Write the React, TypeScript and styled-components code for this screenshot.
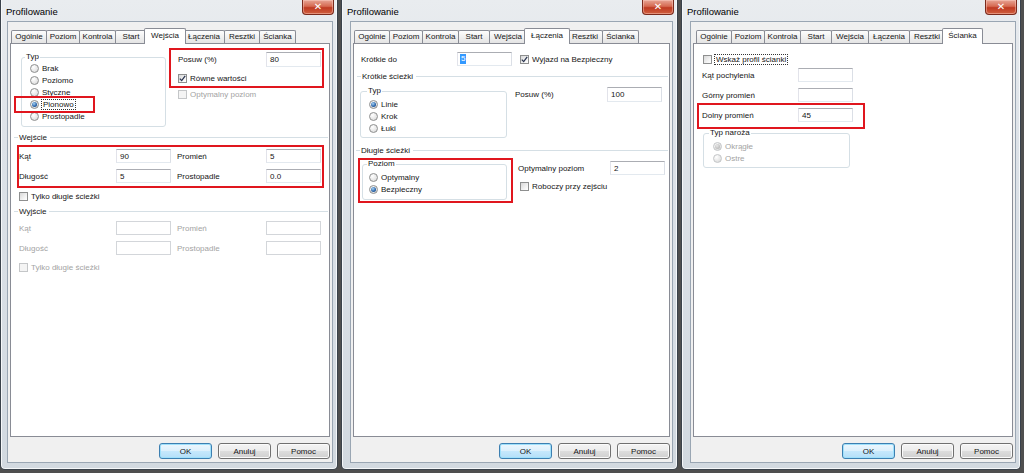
import React from 'react';
import styled, { createGlobalStyle, css } from 'styled-components';

const GlobalStyle = createGlobalStyle`
  html, body { margin: 0; padding: 0; }
  body {
    width: 1024px; height: 473px; overflow: hidden; background: #4a4a4a;
    font-family: 'Liberation Sans', Arial, sans-serif; font-size: 8px; color: #151515;
  }
  * { box-sizing: border-box; }
`;

const Desktop = styled.div`
  display: flex; gap: 3px; width: 1024px; height: 473px; background: #4f4f4f;
`;

const Window = styled.div<{ $w: number; $padL: number }>`
  width: ${p => p.$w}px; height: 470px; flex: none;
  display: flex; flex-direction: column;
  border: 1px solid #3a424b; border-top: none; border-radius: 0 0 5px 5px;
  background: linear-gradient(180deg, #e9ecef 0%, #dde2e8 30%, #d2d9e0 100%);
  box-shadow: inset 1px 0 0 #f5f7f9, inset -1px 0 0 #f5f7f9, inset 0 -1px 0 #f5f7f9;
  padding: 0 4px 6px ${p => p.$padL}px;
`;

const TitleBar = styled.div`
  height: 21px; flex: none; display: flex; align-items: flex-start; justify-content: space-between;
`;

const Title = styled.span<{ $ml: number }>`
  font-size: 9.5px; line-height: 11px; margin-top: 6px; margin-left: ${p => p.$ml}px; color: #000;
`;

const CloseBtn = styled.div`
  width: 32px; height: 15px; margin-right: -1px;
  border: 1px solid #7a2a1c; border-top: none; border-radius: 0 0 4px 4px;
  background: linear-gradient(180deg, #e7a595 0%, #d66a51 45%, #bf3a22 55%, #d0603f 100%);
  box-shadow: inset 0 0 0 1px rgba(255, 210, 200, 0.45);
  color: #fff; display: flex; align-items: center; justify-content: center;
  font: bold 10px 'DejaVu Sans', sans-serif; line-height: 1;
`;

const Client = styled.div`
  flex: 1; display: flex; flex-direction: column; min-height: 0;
  background: #f0f0f0; border: 1px solid #9aa6b3;
  padding: 6px 2px 3px 2px;
`;

const TabRow = styled.div<{ $inset: number }>`
  height: 15px; flex: none; display: flex; align-items: flex-end; padding-left: ${p => p.$inset}px;
  position: relative; z-index: 1;
`;

const Tab = styled.div<{ $active?: boolean; $w: number }>`
  width: ${p => p.$w}px; height: 13px; margin-left: -1px; white-space: nowrap;
  display: flex; justify-content: center;
  border: 1px solid #898c95; border-bottom: none; border-radius: 2px 2px 0 0;
  background: linear-gradient(180deg, #fdfdfd 0%, #f0f0f0 50%, #e4e4e4 100%);
  line-height: 12px; color: #151515;
  ${p => p.$active && css`
    width: ${p.$w + 4}px; height: 16px; margin: 0 -2px -1px -3px;
    background: #fff; position: relative; z-index: 2; line-height: 13px;
  `}
`;

const Panel = styled.div`
  flex: 1; min-height: 0; background: #fff; border: 1px solid #898c95;
  padding: 0 5px 0 7px; display: flex; flex-direction: column;
`;

const ButtonRow = styled.div`
  flex: none; display: flex; justify-content: flex-end; gap: 6px; margin-top: 6px;
`;

const Button = styled.div<{ $default?: boolean }>`
  width: 53px; height: 16px; display: flex; align-items: center; justify-content: center;
  border: 1px solid #707070; border-radius: 3px; color: #151515;
  background: linear-gradient(180deg, #f4f4f4 0%, #ebebeb 50%, #dddddd 51%, #d0d0d0 100%);
  box-shadow: inset 0 0 0 1px #fbfbfb;
  ${p => p.$default && css`
    border-color: #3c7fb1;
    background: linear-gradient(180deg, #ecf6fd 0%, #dcf0fc 50%, #c6e8fc 51%, #b4dff8 100%);
    box-shadow: inset 0 0 0 1px #9fe0fb;
  `}
`;

const Row = styled.div<{ $mt?: number; $ml?: number }>`
  display: flex; align-items: flex-start;
  margin-top: ${p => p.$mt ?? 0}px; margin-left: ${p => p.$ml ?? 0}px;
`;

const Column = styled.div<{ $ml?: number; $pl?: number; $pt?: number }>`
  flex: 1; display: flex; flex-direction: column; align-items: flex-start;
  margin-left: ${p => p.$ml ?? 0}px; padding-left: ${p => p.$pl ?? 0}px; padding-top: ${p => p.$pt ?? 0}px;
`;

const GroupBox = styled.fieldset<{ $w: number; $mt?: number; $ml?: number }>`
  width: ${p => p.$w}px; min-width: 0; flex: none;
  margin: ${p => p.$mt ?? 0}px 0 0 ${p => p.$ml ?? 0}px; padding: 0;
  border: 1px solid #d5dfe5; border-radius: 3px;
`;

const Legend = styled.legend<{ $off: number }>`
  padding: 0 1px; margin-left: ${p => p.$off - 2}px; line-height: 10px; font-size: 8px; color: #151515;
`;

const OptionList = styled.div<{ $pl: number; $pt?: number; $pb: number }>`
  display: flex; flex-direction: column;
  padding: ${p => p.$pt ?? 0}px 0 ${p => p.$pb}px ${p => p.$pl}px;
`;

const OptionRow = styled.div<{ $disabled?: boolean; $mt?: number; $ml?: number }>`
  display: flex; align-items: center; gap: 3px; height: 12px; white-space: nowrap;
  margin-top: ${p => p.$mt ?? 0}px; margin-left: ${p => p.$ml ?? 0}px;
  color: ${p => (p.$disabled ? '#a3a3a3' : '#151515')};
`;

const RadioDot = styled.span<{ $checked?: boolean; $disabled?: boolean }>`
  width: 9px; height: 9px; flex: none; border-radius: 50%;
  border: 1px solid ${p => (p.$disabled ? '#c4c6c8' : '#8e8f8f')};
  background: radial-gradient(circle at 35% 30%, #ffffff 0%, #e6e6e6 60%, #d2d2d2 100%);
  display: inline-flex; align-items: center; justify-content: center;
  &::after {
    content: ''; width: 5px; height: 5px; border-radius: 50%;
    display: ${p => (p.$checked ? 'block' : 'none')};
    background: ${p => (p.$disabled
      ? 'radial-gradient(circle at 40% 35%, #e8e8e8, #a9a9a9)'
      : 'radial-gradient(circle at 40% 35%, #a6d3f5, #2a63a8 60%, #123c70)')};
  }
`;

const CheckBox = styled.span<{ $disabled?: boolean }>`
  width: 9px; height: 9px; flex: none;
  border: 1px solid ${p => (p.$disabled ? '#c4c6c8' : '#8e8f8f')};
  background: ${p => (p.$disabled ? '#f4f4f4' : 'linear-gradient(135deg, #d8d8d8 0%, #f6f6f6 70%, #ffffff 100%)')};
  display: inline-flex; align-items: center; justify-content: center;
`;

const FocusText = styled.span`
  outline: 1px dotted #333; outline-offset: 0; padding: 0 1px;
`;

const FieldLine = styled.div<{ $mt?: number; $ml?: number; $lw: number; $h?: number; $disabled?: boolean }>`
  display: grid; grid-template-columns: ${p => p.$lw}px 55px; align-items: center; width: max-content;
  height: ${p => p.$h ?? 14}px;
  margin-top: ${p => p.$mt ?? 0}px; margin-left: ${p => p.$ml ?? 0}px;
  color: ${p => (p.$disabled ? '#a3a3a3' : '#151515')};
`;

const FieldGrid = styled.div<{ $disabled?: boolean }>`
  display: grid; grid-template-columns: 97px 55px 95px 55px; grid-auto-rows: 14px; row-gap: 6px;
  align-items: center; width: max-content;
  color: ${p => (p.$disabled ? '#a3a3a3' : '#151515')};
`;

const FieldStack = styled.div<{ $mt?: number; $ml?: number }>`
  display: flex; flex-direction: column; gap: 6px; align-items: flex-start;
  margin-top: ${p => p.$mt ?? 0}px; margin-left: ${p => p.$ml ?? 0}px;
`;

const GridLabel = styled.span<{ $second?: boolean }>`
  padding-left: ${p => (p.$second ? 6 : 0)}px; white-space: nowrap;
`;

const Edit = styled.div<{ $disabled?: boolean }>`
  width: 55px; height: 100%; display: flex; align-items: center; padding-left: 3px;
  background: #fff; color: #151515;
  border: 1px solid;
  border-color: ${p => (p.$disabled ? '#d3d6da' : '#abadb3 #dbdfe6 #e3e9ef #e2e3ea')};
`;

const Selected = styled.span`
  background: #3399ff; color: #fff; padding: 0 1px; line-height: 10px; margin-left: -1px;
`;

const SectionTitle = styled.div<{ $mt: number; $ml: number }>`
  display: flex; align-items: center; gap: 1px; height: 10px; white-space: nowrap;
  margin: ${p => p.$mt}px -4px 0 ${p => p.$ml}px;
  &::before { content: ''; width: 4px; border-top: 1px solid #d5dfe5; }
  &::after { content: ''; flex: 1; border-top: 1px solid #d5dfe5; margin-left: 2px; }
`;

const Marked = styled.div<{ $t: number; $r: number; $b: number; $l: number; $mt?: number; $ml?: number }>`
  position: relative; width: max-content;
  margin-top: ${p => p.$mt ?? 0}px; margin-left: ${p => p.$ml ?? 0}px;
  &::after {
    content: ''; position: absolute; pointer-events: none;
    top: ${p => -p.$t}px; right: ${p => -p.$r}px; bottom: ${p => -p.$b}px; left: ${p => -p.$l}px;
    border: 2px solid #e0161e;
  }
`;

const CheckMark = () => (
  <svg width="7" height="7" viewBox="0 0 7 7">
    <path d="M0.8 3.6 L2.7 5.6 L6.2 0.9" fill="none" stroke="#2b3550" strokeWidth="1.3" />
  </svg>
);

type OptProps = {
  children: React.ReactNode;
  checked?: boolean;
  disabled?: boolean;
  mt?: number;
  ml?: number;
};

const Radio = ({ children, checked, disabled, mt, ml }: OptProps) => (
  <OptionRow $disabled={disabled} $mt={mt} $ml={ml}>
    <RadioDot $checked={checked} $disabled={disabled} />
    <span>{children}</span>
  </OptionRow>
);

const Check = ({ children, checked, disabled, mt, ml }: OptProps) => (
  <OptionRow $disabled={disabled} $mt={mt} $ml={ml}>
    <CheckBox $disabled={disabled}>{checked && <CheckMark />}</CheckBox>
    <span>{children}</span>
  </OptionRow>
);

const TABS: [string, number][] = [
  ['Ogólnie', 36],
  ['Poziom', 34],
  ['Kontrola', 37],
  ['Start', 32],
  ['Wejścia', 38],
  ['Łączenia', 42],
  ['Resztki', 36],
  ['Ścianka', 37],
];

type DialogProps = {
  width: number;
  padL: number;
  tabInset: number;
  active: string;
  children: React.ReactNode;
};

const Dialog = ({ width, padL, tabInset, active, children }: DialogProps) => (
  <Window $w={width} $padL={padL}>
    <TitleBar>
      <Title $ml={-padL + 5}>Profilowanie</Title>
      <CloseBtn>✕</CloseBtn>
    </TitleBar>
    <Client>
      <TabRow $inset={tabInset}>
        {TABS.map(([t, w]) => (
          <Tab key={t} $w={w} $active={t === active}>{t}</Tab>
        ))}
      </TabRow>
      <Panel>{children}</Panel>
      <ButtonRow>
        <Button $default>OK</Button>
        <Button>Anuluj</Button>
        <Button>Pomoc</Button>
      </ButtonRow>
    </Client>
  </Window>
);

const EntriesPage = () => (
  <>
    <Row $mt={4}>
      <GroupBox $w={145} $mt={4} $ml={3}>
        <Legend $off={5}>Typ</Legend>
        <OptionList $pl={8} $pb={4}>
          <Radio>Brak</Radio>
          <Radio>Poziomo</Radio>
          <Radio>Styczne</Radio>
          <Marked $t={2} $r={20} $b={3} $l={16}>
            <OptionRow>
              <RadioDot $checked />
              <FocusText>Pionowo</FocusText>
            </OptionRow>
          </Marked>
          <Radio>Prostopadle</Radio>
        </OptionList>
      </GroupBox>
      <Column $ml={3} $pl={9} $pt={4}>
        <Marked $t={4} $r={3} $b={4} $l={9}>
          <FieldLine $lw={88} $h={15}>
            <span>Posuw (%)</span>
            <Edit>80</Edit>
          </FieldLine>
          <Check checked mt={5}>Równe wartości</Check>
        </Marked>
        <Check disabled mt={4}>Optymalny poziom</Check>
      </Column>
    </Row>
    <SectionTitle $mt={5} $ml={-4}>Wejście</SectionTitle>
    <Marked $t={4} $r={3} $b={5} $l={2} $mt={7} $ml={1}>
      <FieldGrid>
        <GridLabel>Kąt</GridLabel>
        <Edit>90</Edit>
        <GridLabel $second>Promień</GridLabel>
        <Edit>5</Edit>
        <GridLabel>Długość</GridLabel>
        <Edit>5</Edit>
        <GridLabel $second>Prostopadle</GridLabel>
        <Edit>0.0</Edit>
      </FieldGrid>
    </Marked>
    <Check mt={7} ml={1}>Tylko długie ścieżki</Check>
    <SectionTitle $mt={4} $ml={-4}>Wyjście</SectionTitle>
    <Row $mt={5} $ml={1}>
      <FieldGrid $disabled>
        <GridLabel>Kąt</GridLabel>
        <Edit $disabled />
        <GridLabel $second>Promień</GridLabel>
        <Edit $disabled />
        <GridLabel>Długość</GridLabel>
        <Edit $disabled />
        <GridLabel $second>Prostopadle</GridLabel>
        <Edit $disabled />
      </FieldGrid>
    </Row>
    <Check disabled mt={6} ml={1}>Tylko długie ścieżki</Check>
  </>
);

const LinksPage = () => (
  <>
    <Row $mt={8}>
      <FieldLine $lw={96}>
        <span>Krótkie do</span>
        <Edit><Selected>5</Selected></Edit>
      </FieldLine>
      <Check checked ml={8} mt={1}>Wyjazd na Bezpieczny</Check>
    </Row>
    <SectionTitle $mt={5} $ml={-4}>Krótkie ścieżki</SectionTitle>
    <Row $mt={5}>
      <GroupBox $w={147} $ml={-1}>
        <Legend $off={8}>Typ</Legend>
        <OptionList $pl={8} $pt={2} $pb={3}>
          <Radio checked>Linie</Radio>
          <Radio>Krok</Radio>
          <Radio>Łuki</Radio>
        </OptionList>
      </GroupBox>
      <Column $ml={8} $pt={1}>
        <FieldLine $lw={92} $h={15}>
          <span>Posuw (%)</span>
          <Edit>100</Edit>
        </FieldLine>
      </Column>
    </Row>
    <SectionTitle $mt={7} $ml={-5}>Długie ścieżki</SectionTitle>
    <Row $mt={4}>
      <Marked $t={1} $r={6} $b={3} $l={4} $ml={1}>
        <GroupBox $w={145}>
          <Legend $off={6}>Poziom</Legend>
          <OptionList $pl={6} $pt={2} $pb={4}>
            <Radio>Optymalny</Radio>
            <Radio checked>Bezpieczny</Radio>
          </OptionList>
        </GroupBox>
      </Marked>
      <Column $ml={8} $pt={2}>
        <FieldLine $lw={92} $ml={3}>
          <span>Optymalny poziom</span>
          <Edit>2</Edit>
        </FieldLine>
        <Check mt={5} ml={5}>Roboczy przy zejściu</Check>
      </Column>
    </Row>
  </>
);

const WallPage = () => (
  <>
    <OptionRow $mt={9} $ml={2}>
      <CheckBox />
      <FocusText>Wskaż profil ścianki</FocusText>
    </OptionRow>
    <FieldStack $mt={3} $ml={1}>
      <FieldLine $lw={96}>
        <span>Kąt pochylenia</span>
        <Edit />
      </FieldLine>
      <FieldLine $lw={96}>
        <span>Górny promień</span>
        <Edit />
      </FieldLine>
      <Marked $t={5} $r={12} $b={7} $l={5}>
        <FieldLine $lw={96}>
          <span>Dolny promień</span>
          <Edit>45</Edit>
        </FieldLine>
      </Marked>
    </FieldStack>
    <GroupBox $w={147} $mt={6} $ml={2}>
      <Legend $off={7}>Typ naroża</Legend>
      <OptionList $pl={9} $pt={2} $pb={3}>
        <Radio checked disabled>Okrągłe</Radio>
        <Radio disabled>Ostre</Radio>
      </OptionList>
    </GroupBox>
  </>
);

export default function App() {
  return (
    <>
      <GlobalStyle />
      <Desktop>
        <Dialog width={338} padL={6} tabInset={2} active="Wejścia"><EntriesPage /></Dialog>
        <Dialog width={337} padL={8} tabInset={2} active="Łączenia"><LinksPage /></Dialog>
        <Dialog width={340} padL={8} tabInset={4} active="Ścianka"><WallPage /></Dialog>
      </Desktop>
    </>
  );
}
